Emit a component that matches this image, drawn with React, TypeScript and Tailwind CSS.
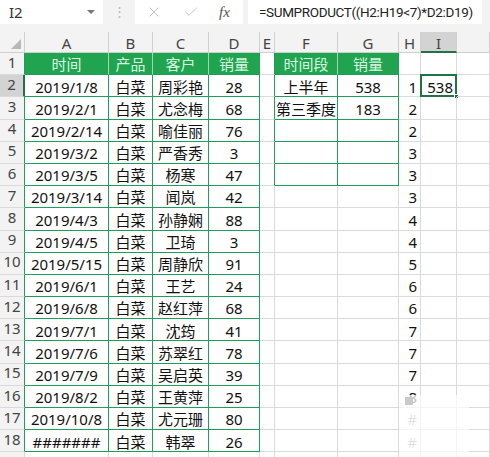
import React from 'react';
import { X, Check } from 'lucide-react';

// column widths: row header, A..J
const widths = [25, 84, 44, 56, 51, 15, 63, 61, 22, 36, 33];
const letters = ['', 'A', 'B', 'C', 'D', 'E', 'F', 'G', 'H', 'I', ''];

const GREEN = '#1f9d5a';
const GRID = '#dadada';
const HEAD_LINE = '#9fd8b2';

type Row = [string, string, string, string, string];

const data: Row[] = [
  ['2019/1/8', '白菜', '周彩艳', '28', '1'],
  ['2019/2/1', '白菜', '尤念梅', '68', '2'],
  ['2019/2/14', '白菜', '喻佳丽', '76', '2'],
  ['2019/3/2', '白菜', '严香秀', '3', '3'],
  ['2019/3/5', '白菜', '杨寒', '47', '3'],
  ['2019/3/14', '白菜', '闻岚', '42', '3'],
  ['2019/4/3', '白菜', '孙静娴', '88', '4'],
  ['2019/4/5', '白菜', '卫琦', '3', '4'],
  ['2019/5/15', '白菜', '周静欣', '91', '5'],
  ['2019/6/1', '白菜', '王艺', '24', '6'],
  ['2019/6/8', '白菜', '赵红萍', '68', '6'],
  ['2019/7/1', '白菜', '沈筠', '41', '7'],
  ['2019/7/6', '白菜', '苏翠红', '78', '7'],
  ['2019/7/9', '白菜', '吴启英', '39', '7'],
  ['2019/8/2', '白菜', '王黄萍', '25', '8'],
  ['2019/10/8', '白菜', '尤元珊', '80', '#'],
  ['#######', '白菜', '韩翠', '26', '#'],
  ['2019/10/9', '白菜', '周文琪', '52', '#'],
];

const summary: Record<number, [string, string]> = {
  1: ['时间段', '销量'],
  2: ['上半年', '538'],
  3: ['第三季度', '183'],
  4: ['', ''],
  5: ['', ''],
  6: ['', ''],
};

function Cell({
  w,
  right,
  bottom,
  bg,
  align = 'center',
  color = '#111',
  children,
}: {
  w: number;
  right: string;
  bottom: string;
  bg?: string;
  align?: 'center' | 'right';
  color?: string;
  children?: React.ReactNode;
}) {
  return (
    <div
      className={`relative h-full shrink-0 flex items-center pt-[2px] whitespace-nowrap border-r border-b ${
        align === 'right' ? 'justify-end pr-[3px]' : 'justify-center'
      }`}
      style={{ width: w, borderRightColor: right, borderBottomColor: bottom, background: bg, color }}
    >
      {children}
    </div>
  );
}

function SheetRow({ n }: { n: number }) {
  const inMain = n >= 1 && n <= 18;
  const inSide = n >= 1 && n <= 6;
  const isHead = n === 1;
  const d = n >= 2 ? data[n - 2] : null;
  const s = summary[n];
  const selected = n === 2;

  return (
    <div className="flex h-[22.2px]">
      {/* row header */}
      <div
        className={`h-full shrink-0 flex items-end justify-center pb-[1px] text-[15px] text-[#444] border-b ${
          selected ? 'bg-[#d3d3d3] border-r-2' : 'bg-[#f3f3f3] border-r'
        }`}
        style={{
          width: widths[0],
          borderBottomColor: GRID,
          borderRightColor: selected ? '#217346' : inMain ? GREEN : GRID,
        }}
      >
        {n}
      </div>
      {/* A-D */}
      {[0, 1, 2, 3].map((c) => (
        <Cell
          key={c}
          w={widths[c + 1]}
          right={inMain ? (isHead && c < 3 ? HEAD_LINE : GREEN) : GRID}
          bottom={inMain ? GREEN : GRID}
          bg={isHead ? '#20a44f' : undefined}
          color={isHead ? '#d9f6e1' : '#111'}
        >
          {isHead ? ['时间', '产品', '客户', '销量'][c] : d ? d[c] : ''}
        </Cell>
      ))}
      {/* E */}
      <Cell w={widths[5]} right={inSide ? GREEN : GRID} bottom={GRID} />
      {/* F-G */}
      {[0, 1].map((c) => (
        <Cell
          key={c}
          w={widths[6 + c]}
          right={inSide ? (isHead && c === 0 ? HEAD_LINE : GREEN) : GRID}
          bottom={inSide ? GREEN : GRID}
          bg={isHead ? '#20a44f' : undefined}
          color={isHead ? '#d9f6e1' : '#111'}
        >
          {s ? s[c] : ''}
        </Cell>
      ))}
      {/* H */}
      <Cell w={widths[8]} right={GRID} bottom={GRID} align="right" color={n >= 17 ? '#9a9a9a' : '#111'}>
        {d ? d[4] : ''}
      </Cell>
      {/* I */}
      <Cell w={widths[9]} right={GRID} bottom={GRID} align="right">
        {selected && (
          <>
            538
            <div className="absolute -left-[1px] -top-[1px] w-[37px] h-[23px] border-2 border-[#217346]" />
            <div className="absolute -right-[3px] -bottom-[3px] w-[5px] h-[5px] bg-[#217346] border border-white" />
          </>
        )}
      </Cell>
      <Cell w={widths[10]} right={GRID} bottom={GRID} />
    </div>
  );
}

export default function App() {
  const rows = Array.from({ length: 19 }, (_, i) => i + 1);
  return (
    <div
      className="relative w-[490px] h-[457px] overflow-hidden bg-white text-[15px]"
      style={{ fontFamily: '"Noto Sans", "Noto Sans CJK SC", sans-serif' }}
    >
      {/* formula bar */}
      <div className="flex h-[32px] bg-[#f3f3f3]">
        <div className="w-[103px] h-[24px] bg-white flex items-center justify-between pl-[9px] pr-[8px] text-[15px] text-[#333]">
          <span>I2</span>
          <span className="w-0 h-0 border-l-[4px] border-r-[4px] border-t-[4px] border-l-transparent border-r-transparent border-t-[#777]" />
        </div>
        <div className="w-[32px] h-[24px] flex items-center justify-center text-[#b8b8b8] text-[13px]">⋮</div>
        <div className="w-[108px] h-[24px] bg-white flex items-center pl-[11px]">
          <X size={16} strokeWidth={1.5} color="#c4c4c4" />
          <Check size={16} strokeWidth={1.5} color="#c4c4c4" className="ml-[21px]" />
          <span
            className="ml-[20px] text-[15px] italic text-[#555]"
            style={{ fontFamily: '"Liberation Serif", serif' }}
          >
            fx
          </span>
        </div>
        <div
          className="ml-[5px] w-[234px] h-[24px] bg-white flex items-center pl-[11px] text-[13.5px] tracking-[-0.35px] text-[#222] whitespace-nowrap overflow-hidden"
          style={{ fontFamily: 'Roboto, "Noto Sans", sans-serif' }}
        >
          =SUMPRODUCT((H2:H19&lt;7)*D2:D19)
        </div>
      </div>

      {/* column letters */}
      <div className="flex h-[21px]">
        {widths.map((w, i) => (
          <div
            key={i}
            className={`relative h-full shrink-0 flex items-center justify-center pt-[3px] text-[15px] text-[#444] border-r border-[#d0d0d0] ${
              i === 9 ? 'bg-[#d3d3d3] border-b-2 border-b-[#217346]' : 'bg-[#f3f3f3] border-b border-b-[#cfcfcf]'
            }`}
            style={{ width: w }}
          >
            {i === 0 ? (
              <svg className="absolute right-[3px] bottom-[3px]" width="10" height="10" viewBox="0 0 10 10">
                <polygon points="10,0 10,10 0,10" fill="#b8b8b8" />
              </svg>
            ) : (
              letters[i]
            )}
          </div>
        ))}
      </div>

      {rows.map((n) => (
        <SheetRow key={n} n={n} />
      ))}

      {/* faded stamp over the lower right corner */}
      <div className="absolute left-[399px] top-[395px] w-[70px] h-[62px] bg-white/70" />
      <div className="absolute left-[405px] top-[397px] w-[8px] h-[8px] bg-[#c9c9c9]" />
    </div>
  );
}
